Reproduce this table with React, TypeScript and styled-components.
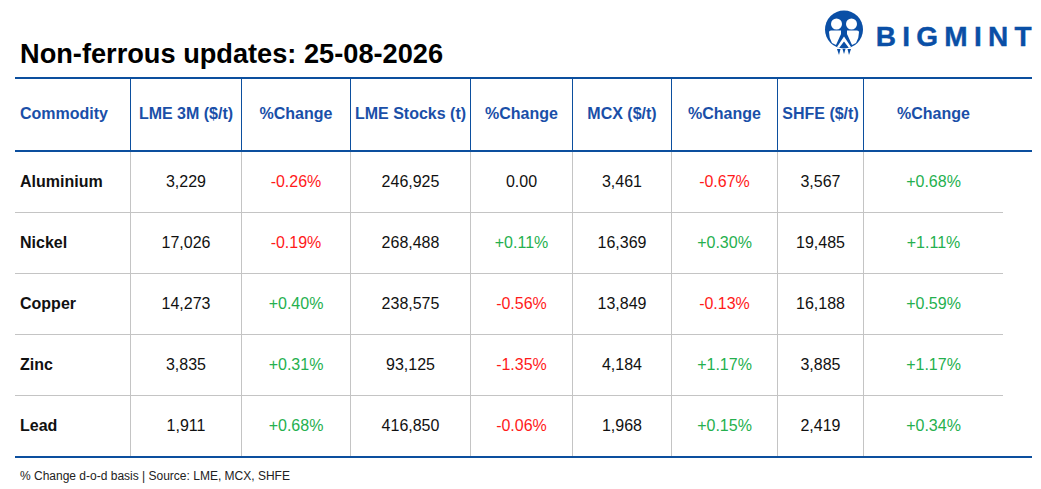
import React from "react";
import styled, { createGlobalStyle } from "styled-components";

const Global = createGlobalStyle`
  html, body { margin: 0; padding: 0; background: #ffffff; }
  body { font-family: "Liberation Sans", Arial, sans-serif; color: #111; }
`;

const BLUE = "#0c4f9e";
const COLS = "115px 111px 109px 120px 102px 99px 106px 86px 140px";

const Page = styled.div`
  width: 1041px;
  height: 489px;
  padding-left: 15px;
  box-sizing: border-box;
  overflow: hidden;
`;

const Top = styled.div`
  height: 77px;
  width: 1017px;
  display: flex;
  justify-content: space-between;
`;

const Title = styled.h1`
  margin: 40px 0 0 5px;
  font-size: 27.2px;
  line-height: 27px;
  font-weight: 700;
  color: #000;
  align-self: flex-start;
`;

const Logo = styled.div`
  display: flex;
  align-items: flex-start;
  gap: 12px;
  margin-top: 10px;
`;

const LogoText = styled.span`
  font-size: 28px;
  line-height: 28px;
  font-weight: 700;
  letter-spacing: 6.3px;
  margin-right: -6px;
  margin-top: 13px;
  color: #0a4fa6;
  -webkit-text-stroke: 0.4px #0a4fa6;
`;

const Table = styled.div`
  width: 1017px;
  border-top: 2px solid ${BLUE};
  border-bottom: 2px solid ${BLUE};
`;

const HeadRow = styled.div`
  display: grid;
  grid-template-columns: ${COLS} 29px;
  height: 71px;
  border-bottom: 2px solid ${BLUE};
`;

const HeadCell = styled.div<{ $first?: boolean; $spacer?: boolean }>`
  display: flex;
  align-items: center;
  justify-content: ${(p) => (p.$first ? "flex-start" : "center")};
  padding-left: ${(p) => (p.$first ? "5px" : "0")};
  border-left: ${(p) => (p.$first || p.$spacer ? "none" : `1.5px solid ${BLUE}`)};
  font-size: 16px;
  font-weight: 700;
  color: #1a4fa8;
  white-space: nowrap;
  margin-top: -2px;
`;

const Row = styled.div<{ $last?: boolean }>`
  display: grid;
  grid-template-columns: ${COLS};
  width: 988px;
  height: 60px;
  border-bottom: ${(p) => (p.$last ? "none" : "1px solid #c4c4c4")};
`;

const Cell = styled.div<{ $first?: boolean; $tone?: "up" | "down" | "flat" }>`
  display: flex;
  align-items: center;
  justify-content: ${(p) => (p.$first ? "flex-start" : "center")};
  padding-left: ${(p) => (p.$first ? "5px" : "0")};
  border-left: ${(p) => (p.$first ? "none" : "1px solid #c4c4c4")};
  font-size: 16px;
  font-weight: ${(p) => (p.$first ? 700 : 400)};
  color: ${(p) =>
    p.$tone === "up" ? "#25b04e" : p.$tone === "down" ? "#ff1a1a" : "#111"};
  white-space: nowrap;
`;

const Footer = styled.div`
  margin: 11px 0 0 5px;
  font-size: 12px;
  color: #222;
`;

const heads = [
  "Commodity",
  "LME 3M ($/t)",
  "%Change",
  "LME Stocks (t)",
  "%Change",
  "MCX ($/t)",
  "%Change",
  "SHFE ($/t)",
  "%Change",
];

const rows: string[][] = [
  ["Aluminium", "3,229", "-0.26%", "246,925", "0.00", "3,461", "-0.67%", "3,567", "+0.68%"],
  ["Nickel", "17,026", "-0.19%", "268,488", "+0.11%", "16,369", "+0.30%", "19,485", "+1.11%"],
  ["Copper", "14,273", "+0.40%", "238,575", "-0.56%", "13,849", "-0.13%", "16,188", "+0.59%"],
  ["Zinc", "3,835", "+0.31%", "93,125", "-1.35%", "4,184", "+1.17%", "3,885", "+1.17%"],
  ["Lead", "1,911", "+0.68%", "416,850", "-0.06%", "1,968", "+0.15%", "2,419", "+0.34%"],
];

const tone = (v: string): "up" | "down" | "flat" =>
  v.startsWith("+") ? "up" : v.startsWith("-") ? "down" : "flat";

const LogoMark = () => (
  <svg width="40" height="45" viewBox="0 0 40 45">
    <circle cx="20" cy="19.5" r="19" fill="#0a4fa6" />
    <circle cx="12.5" cy="14" r="5.5" fill="#fff" />
    <circle cx="27.5" cy="14" r="5.5" fill="#fff" />
    <path d="M5 22 Q5 20.5 7 20.5 L17 20.5 L17 24 L12 35 L8 33 Q5 28 5 22 Z" fill="#fff" />
    <path d="M35 22 Q35 20.5 33 20.5 L23 20.5 L23 24 L28 35 L32 33 Q35 28 35 22 Z" fill="#fff" />
    <path d="M13 37 L20 26.5 L27 37 L25 38 L20 31.5 L15 38 Z" fill="#fff" />
    <path d="M13 39 L16.5 39 L15 45 Z" fill="#0a4fa6" />
    <path d="M18.5 39 L21.5 39 L20 44 Z" fill="#0a4fa6" />
    <path d="M23.5 39 L27 39 L25 45 Z" fill="#0a4fa6" />
  </svg>
);

export default function App() {
  return (
    <Page>
      <Global />
      <Top>
        <Title>Non-ferrous updates: 25-08-2026</Title>
        <Logo>
          <LogoMark />
          <LogoText>BIGMINT</LogoText>
        </Logo>
      </Top>
      <Table>
        <HeadRow>
          {heads.map((h, i) => (
            <HeadCell key={i} $first={i === 0}>
              {h}
            </HeadCell>
          ))}
          <HeadCell $spacer />
        </HeadRow>
        {rows.map((r, ri) => (
          <Row key={ri} $last={ri === rows.length - 1}>
            {r.map((v, ci) => (
              <Cell
                key={ci}
                $first={ci === 0}
                $tone={ci === 0 ? "flat" : tone(v)}
              >
                {v}
              </Cell>
            ))}
          </Row>
        ))}
      </Table>
      <Footer>% Change d-o-d basis | Source: LME, MCX, SHFE</Footer>
    </Page>
  );
}
